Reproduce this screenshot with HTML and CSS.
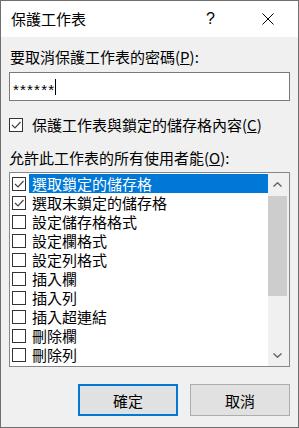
FILE: index.html
```html
<!DOCTYPE html>
<html>
<head>
    <meta charset="utf-8">
    <link rel="stylesheet" href="styles.css">
    <title>保護工作表</title>
</head>
<body>
    <div class="window">
        <div class="titlebar">
            <span class="titleText">保護工作表</span>
            <span class="helpBtn">?</span>
            <span class="closeBtn">
                <svg width="12" height="12" viewBox="0 0 12 12"><path d="M0.5 0.5L11.5 11.5M11.5 0.5L0.5 11.5" stroke="#000" stroke-width="1"/></svg>
            </span>
        </div>
        <div class="content">
            <div class="label first">要取消保護工作表的密碼(<u>P</u>):</div>
            <div class="pwBox"><span class="pwText">******</span><span class="caret"></span></div>

            <div class="checkRow">
                <span class="box checked"></span>
                <span>保護工作表與鎖定的儲存格內容(<u>C</u>)</span>
            </div>

            <div class="label">允許此工作表的所有使用者能(<u>O</u>):</div>
            <div class="listBox">
                <div class="items" id="items"></div>
                <div class="scrollbar">
                    <div class="arrow">
                        <svg width="9" height="5" viewBox="0 0 9 5"><path d="M0.5 4.5L4.5 0.8L8.5 4.5" fill="none" stroke="#606060" stroke-width="1.4"/></svg>
                    </div>
                    <div class="track"><div class="thumb"></div></div>
                    <div class="arrow">
                        <svg width="9" height="5" viewBox="0 0 9 5"><path d="M0.5 0.5L4.5 4.2L8.5 0.5" fill="none" stroke="#606060" stroke-width="1.4"/></svg>
                    </div>
                </div>
            </div>

            <div class="buttons">
                <button class="btn default">確定</button>
                <button class="btn">取消</button>
            </div>
        </div>
    </div>
    <script type="text/javascript">
// permissions shown in the list, the first two are ticked
let perms=["選取鎖定的儲存格","選取未鎖定的儲存格","設定儲存格格式","設定欄格式","設定列格式","插入欄","插入列","插入超連結","刪除欄","刪除列"];
let html="";
for(var i=0;i<perms.length;i++){
    let cls = i<2 ? "box checked" : "box";
    let sel = i==0 ? " selected" : "";
    html+=`<div class="item"><span class="${cls}"></span><span class="itemText${sel}">${perms[i]}</span></div>`;
}
document.getElementById("items").innerHTML=html;
    </script>
</body>
</html>
```

FILE: styles.css
```css
*{
    margin: 0px;
    padding: 0px;
    box-sizing: border-box;
}
body{
    background-color: #f0f0f0;
    font-family: "Noto Sans CJK TC", "Noto Sans", sans-serif;
    font-size: 15px;
    color: #000;
}
.window{
    width: 299px;
    height: 428px;
    border: 1px solid #6f6f6f;
    background-color: #f0f0f0;
    display: flex;
    flex-direction: column;
    overflow: hidden;
}
.titlebar{
    height: 36px;
    background-color: #fff;
    display: flex;
    align-items: center;
    padding-left: 10px;
}
.titleText{
    font-size: 15px;
    line-height: 20px;
    flex: 1;
}
.helpBtn{
    font-family: "Liberation Sans", sans-serif;
    font-size: 16px;
    line-height: 20px;
    width: 12px;
    margin-right: 44px;
}
.closeBtn{
    width: 12px;
    height: 12px;
    margin-right: 24px;
    display: flex;
}
.content{
    padding: 0px 8px;
    display: flex;
    flex-direction: column;
}
.label{
    height: 19px;
    line-height: 19px;
    margin-top: 14px;
    white-space: nowrap;
}
.label.first{
    margin-top: 10px;
    padding-left: 1px;
}
.pwBox{
    margin-top: 6px;
    height: 29px;
    border: 1px solid #7a7a7a;
    background-color: #fff;
    display: flex;
    align-items: center;
    padding-left: 3px;
}
.pwText{
    font-family: "Liberation Sans", sans-serif;
    font-size: 15px;
    letter-spacing: 1.2px;
    line-height: 15px;
    padding-top: 5px;
}
.caret{
    width: 1px;
    height: 16px;
    background-color: #000;
    margin-left: 0px;
}
.checkRow{
    margin-top: 14px;
    height: 19px;
    display: flex;
    align-items: center;
    line-height: 19px;
    white-space: nowrap;
}
.checkRow .box{
    margin-right: 9px;
}
.box{
    width: 14px;
    height: 14px;
    border: 1px solid #333;
    background-color: #fff;
    flex-shrink: 0;
    display: inline-block;
}
.box.checked{
    background-image: url("data:image/svg+xml;utf8,<svg xmlns='http://www.w3.org/2000/svg' width='12' height='12'><path d='M2 6L5 9L10.5 3' fill='none' stroke='%23444' stroke-width='1.2'/></svg>");
    background-repeat: no-repeat;
    background-position: center;
}
.listBox{
    margin-top: 5px;
    height: 195px;
    border: 1px solid #828790;
    background-color: #fff;
    display: flex;
}
.items{
    flex: 1;
    padding-top: 1px;
    overflow: hidden;
}
.item{
    height: 19px;
    display: flex;
    align-items: center;
    padding-left: 2px;
}
.itemText{
    flex: 1;
    height: 19px;
    line-height: 19px;
    margin-left: 3px;
    padding-left: 3px;
    white-space: nowrap;
}
.itemText.selected{
    background-color: #0078d7;
    color: #fff;
}
.scrollbar{
    width: 21px;
    background-color: #f0f0f0;
    display: flex;
    flex-direction: column;
}
.arrow{
    height: 22px;
    display: flex;
    align-items: center;
    justify-content: center;
    padding-right: 2px;
}
.track{
    flex: 1;
    padding-top: 1px;
}
.thumb{
    width: 19px;
    height: 100px;
    background-color: #cdcdcd;
}
.buttons{
    margin-top: 17px;
    display: flex;
    justify-content: flex-end;
    gap: 12px;
}
.btn{
    width: 100px;
    height: 32px;
    background-color: #e1e1e1;
    border: 1px solid #adadad;
    font-family: "Noto Sans CJK TC", sans-serif;
    font-size: 15px;
    color: #000;
}
.btn.default{
    border: 2px solid #0078d7;
}
```
